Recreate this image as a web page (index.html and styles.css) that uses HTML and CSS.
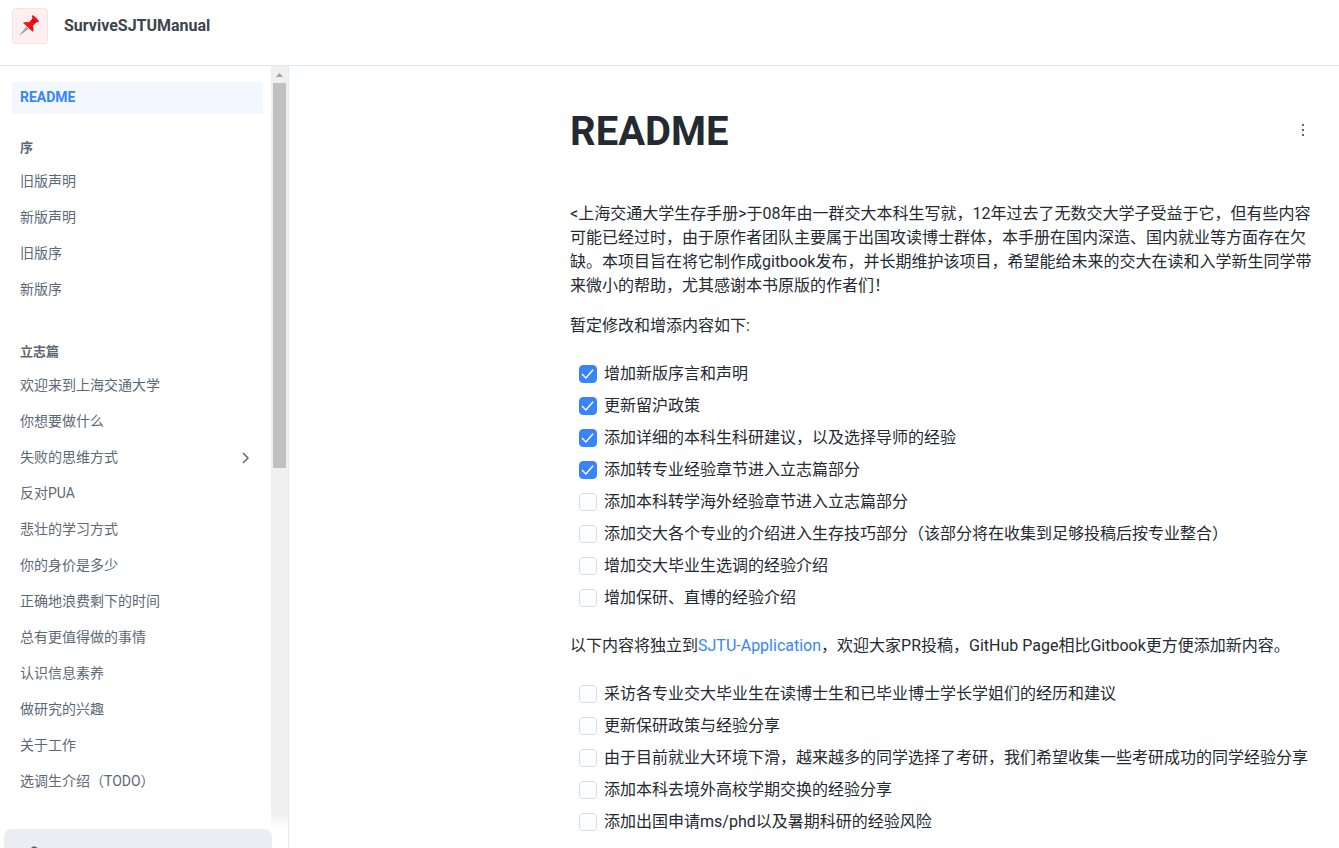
FILE: index.html
```html
<!DOCTYPE html>
<html lang="zh-CN">
<head>
<meta charset="utf-8">
<title>README - SurviveSJTUManual</title>
<link rel="stylesheet" href="styles.css">
</head>
<body>
<header class="topbar">
  <a class="brand" href="#">
    <svg class="brand-icon" viewBox="0 0 36 36" aria-hidden="true">
      <defs>
        <linearGradient id="pin" x1="0" y1="0" x2="1" y2="1"><stop offset="0" stop-color="#f8353c"/><stop offset=".5" stop-color="#f5101a"/><stop offset="1" stop-color="#d5000a"/></linearGradient>
      </defs>
      <rect x=".5" y=".5" width="35" height="35" rx="3" fill="#fff0ef" stroke="#f0e4e5"/>
      <path d="M14.300 18.600L16.600 20.900L8.200 27Q7.300 27.500 7.800 26.500Z" fill="#9ea5aa"/>
      <path d="M20.200 7.200C21.200 6.900 22.600 8.100 24.300 9.900C26 11.600 27.300 13 26.700 13.900C25.900 14.500 25 14.200 24.300 14L20.900 18C21.700 20.300 21.700 22.500 20.700 23.700L11 14.900C12.300 13.700 14.700 13.700 16.800 14.300L20.600 10.500C19.900 9.200 19.500 7.800 20.200 7.200Z" fill="url(#pin)"/>
      <path d="M20.600 10.500L24.300 14L23.300 15.200L19.600 11.500Z" fill="#c9000c"/>
    </svg>
    <span>SurviveSJTUManual</span>
  </a>
</header>
<div class="layout">
  <aside class="sidebar">
    <div class="sidebar-body">
      <nav class="nav">
        <a class="nav-link active" href="#">README</a>
        <section class="nav-group">
          <h2>序</h2>
          <a class="nav-link" href="#">旧版声明</a>
          <a class="nav-link" href="#">新版声明</a>
          <a class="nav-link" href="#">旧版序</a>
          <a class="nav-link" href="#">新版序</a>
        </section>
        <section class="nav-group">
          <h2>立志篇</h2>
          <a class="nav-link" href="#">欢迎来到上海交通大学</a>
          <a class="nav-link" href="#">你想要做什么</a>
          <a class="nav-link" href="#">失败的思维方式<svg class="chevron" viewBox="0 0 16 16" aria-hidden="true"><path d="M4 4L9 9L4 14"/></svg></a>
          <a class="nav-link" href="#">反对PUA</a>
          <a class="nav-link" href="#">悲壮的学习方式</a>
          <a class="nav-link" href="#">你的身价是多少</a>
          <a class="nav-link" href="#">正确地浪费剩下的时间</a>
          <a class="nav-link" href="#">总有更值得做的事情</a>
          <a class="nav-link" href="#">认识信息素养</a>
          <a class="nav-link" href="#">做研究的兴趣</a>
          <a class="nav-link" href="#">关于工作</a>
          <a class="nav-link" href="#">选调生介绍（TODO）</a>
        </section>
      </nav>
      <div class="scrollbar" aria-hidden="true">
        <svg class="scroll-arrow" viewBox="0 0 17 17"><path d="M5 11L8.500 7L12 11Z"/></svg>
        <div class="scroll-track"><div class="scroll-thumb"></div></div>
      </div>
    </div>
    <div class="sidebar-footer">
      <a class="footer-card" href="#" aria-label="GitBook">
        <svg class="footer-icon" viewBox="0 0 24 24" aria-hidden="true"><path d="M2 10L10 2Q12 .5 14 2L22 6V13L12 19L2 13Z"/></svg>
      </a>
    </div>
  </aside>
  <main class="main">
    <article class="article">
      <div class="title-row">
        <h1>README</h1>
        <button class="more" type="button" aria-label="More"><svg viewBox="0 0 24 24"><path d="M11 6h2v2h-2zM11 11h2v2h-2zM11 16h2v2h-2z"/></svg></button>
      </div>
      <p>&lt;上海交通大学生存手册&gt;于08年由一群交大本科生写就，12年过去了无数交大学子受益于它，但有些内容可能已经过时，由于原作者团队主要属于出国攻读博士群体，本手册在国内深造、国内就业等方面存在欠缺。本项目旨在将它制作成gitbook发布，并长期维护该项目，希望能给未来的交大在读和入学新生同学带来微小的帮助，尤其感谢本书原版的作者们！</p>
      <p>暂定修改和增添内容如下:</p>
      <ul class="tasks">
        <li><label><input type="checkbox" checked>增加新版序言和声明</label></li>
        <li><label><input type="checkbox" checked>更新留沪政策</label></li>
        <li><label><input type="checkbox" checked>添加详细的本科生科研建议，以及选择导师的经验</label></li>
        <li><label><input type="checkbox" checked>添加转专业经验章节进入立志篇部分</label></li>
        <li><label><input type="checkbox">添加本科转学海外经验章节进入立志篇部分</label></li>
        <li><label><input type="checkbox">添加交大各个专业的介绍进入生存技巧部分（该部分将在收集到足够投稿后按专业整合）</label></li>
        <li><label><input type="checkbox">增加交大毕业生选调的经验介绍</label></li>
        <li><label><input type="checkbox">增加保研、直博的经验介绍</label></li>
      </ul>
      <p>以下内容将独立到<a class="link" href="#">SJTU-Application</a>，欢迎大家PR投稿，GitHub Page相比Gitbook更方便添加新内容。</p>
      <ul class="tasks">
        <li><label><input type="checkbox">采访各专业交大毕业生在读博士生和已毕业博士学长学姐们的经历和建议</label></li>
        <li><label><input type="checkbox">更新保研政策与经验分享</label></li>
        <li><label><input type="checkbox">由于目前就业大环境下滑，越来越多的同学选择了考研，我们希望收集一些考研成功的同学经验分享</label></li>
        <li><label><input type="checkbox">添加本科去境外高校学期交换的经验分享</label></li>
        <li><label><input type="checkbox">添加出国申请ms/phd以及暑期科研的经验风险</label></li>
      </ul>
    </article>
  </main>
</div>
</body>
</html>
```
FILE: styles.css
```css
* { box-sizing: border-box; }

body {
  margin: 0;
  height: 100vh;
  display: flex;
  flex-direction: column;
  overflow: hidden;
  background: #fff;
  color: #242a31;
  font-family: Roboto, "Noto Sans CJK SC", sans-serif;
  font-size: 16px;
  line-height: 24px;
}

a { text-decoration: none; }

.topbar {
  flex: none;
  padding: 8px 12px 21px;
  border-bottom: 1px solid #e3e8ed;
}

.brand {
  display: flex;
  align-items: center;
  gap: 16px;
  color: #3b454e;
  font-weight: 700;
}

.brand-icon { width: 36px; height: 36px; }

.layout {
  flex: 1;
  min-height: 0;
  display: flex;
}

.sidebar {
  flex: none;
  width: 289px;
  display: flex;
  flex-direction: column;
  border-right: 1px solid #e3e8ed;
}

.sidebar-body {
  flex: 1;
  min-height: 0;
  display: flex;
}

.nav {
  flex: 1;
  padding: 16px 8px 0 12px;
  overflow: hidden;
}

.nav-link {
  display: flex;
  align-items: center;
  justify-content: space-between;
  margin-bottom: 4px;
  padding: 4px 8px;
  border-radius: 3px;
  color: #5c6975;
  font-size: 14px;
  line-height: 24px;
}

.nav-link.active {
  margin-bottom: 24px;
  padding: 3px 8px 5px;
  background: #f3f7ff;
  color: #3884ff;
  font-weight: 700;
}

.nav-group { margin-bottom: 37px; }

.nav-group h2 {
  margin: 0 0 7px;
  padding: 0 8px;
  color: #5c6975;
  font-size: 13px;
  font-weight: 700;
  line-height: 20px;
}

.chevron {
  width: 16px;
  height: 16px;
  fill: none;
  stroke: #5c6975;
  stroke-width: 1.500;
}

.scrollbar {
  flex: none;
  width: 17px;
  display: flex;
  flex-direction: column;
  background: linear-gradient(to top, #fff, #f0f0f0 16px);
}

.scroll-arrow { width: 17px; height: 17px; fill: #a3a3a3; }

.scroll-track { flex: 1; padding: 0 2px; }

.scroll-thumb { height: 51.6%; background: #c1c1c1; }

.sidebar-footer {
  flex: none;
  height: 19px;
  padding: 0 16px 0 4px;
  overflow: hidden;
}

.footer-card {
  display: block;
  padding: 16px 18px;
  border-radius: 8px 8px 0 0;
  background: #eaedf1;
}

.footer-icon { display: block; width: 24px; height: 24px; fill: #5c6975; }

.main {
  flex: 1;
  min-width: 0;
  padding: 38px 24px 0 281px;
  overflow: hidden;
}

.title-row {
  display: flex;
  align-items: center;
  justify-content: space-between;
  margin-bottom: 46px;
}

h1 {
  margin: 4px 0 0;
  font-size: 40px;
  font-weight: 700;
  line-height: 48px;
}

.more {
  width: 24px;
  height: 24px;
  padding: 0;
  border: 0;
  background: none;
}

.more svg { display: block; fill: #5c6975; }

p { margin: 0 0 16px; }

.tasks {
  margin: 24px 0;
  padding: 0 0 0 9px;
  display: flex;
  flex-direction: column;
  gap: 8px;
  list-style: none;
}

.tasks label {
  display: flex;
  align-items: center;
  gap: 7px;
}

.tasks input {
  appearance: none;
  flex: none;
  width: 18px;
  height: 18px;
  margin: 0;
  display: grid;
  border: 1px solid #d3dce4;
  border-radius: 4px;
  background: #fff;
}

.tasks input:checked {
  border-color: #3884ff;
  background: #3884ff;
}

.tasks input:checked::before {
  content: "";
  background: #fff;
  clip-path: polygon(9% 53%, 16% 47%, 36% 68%, 78% 20%, 85% 27%, 37% 82%);
}

.link { color: #3884ff; }
```
